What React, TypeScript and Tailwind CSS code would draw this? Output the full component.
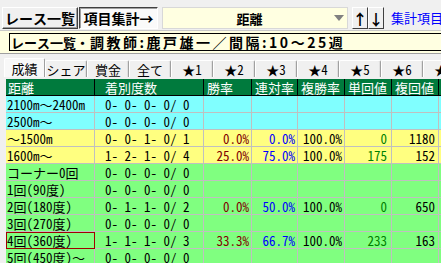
import React from 'react'

const FONT = { fontFamily: '"Noto Sans Mono CJK JP", "Noto Sans CJK JP", "Noto Sans", monospace' }
const PROP = { fontFamily: '"Noto Sans CJK JP", "Noto Sans", sans-serif' }

const TABS = ['成績', 'シェア', '賞金', '全て', '★1', '★2', '★3', '★4', '★5', '★6', '★7']

const HEAD = ['距離', '着別度数', '勝率', '連対率', '複勝率', '単回値', '複回値', '']
const W = ['w-[89px]', 'w-[109px]', 'w-[48px]', 'w-[46px]', 'w-[47px]', 'w-[47px]', 'w-[47px]', 'w-[40px]']

type Row = { name: string; count: string; bg: string; win?: string; ren?: string; fuku?: string; tan?: string; fk?: string; sel?: boolean }

const ROWS: Row[] = [
  { name: '2100m～2400m', count: '0- 0- 0- 0/ 0', bg: 'bg-[#80ffff]' },
  { name: '2500m～', count: '0- 0- 0- 0/ 0', bg: 'bg-[#80ffff]' },
  { name: '～1500m', count: '0- 0- 1- 0/ 1', bg: 'bg-[#ffff80]', win: '0.0%', ren: '0.0%', fuku: '100.0%', tan: '0', fk: '1180' },
  { name: '1600m～', count: '1- 2- 1- 0/ 4', bg: 'bg-[#ffff80]', win: '25.0%', ren: '75.0%', fuku: '100.0%', tan: '175', fk: '152' },
  { name: 'コーナー0回', count: '0- 0- 0- 0/ 0', bg: 'bg-[#80ff80]' },
  { name: '1回(90度)', count: '0- 0- 0- 0/ 0', bg: 'bg-[#80ff80]' },
  { name: '2回(180度)', count: '0- 1- 1- 0/ 2', bg: 'bg-[#80ff80]', win: '0.0%', ren: '50.0%', fuku: '100.0%', tan: '0', fk: '650' },
  { name: '3回(270度)', count: '0- 0- 0- 0/ 0', bg: 'bg-[#80ff80]' },
  { name: '4回(360度)', count: '1- 1- 1- 0/ 3', bg: 'bg-[#80ff80]', win: '33.3%', ren: '66.7%', fuku: '100.0%', tan: '233', fk: '163', sel: true },
  { name: '5回(450度)～', count: '0- 0- 0- 0/ 0', bg: 'bg-[#80ff80]' },
]

function Cell({ w, children, cls = '' }: { w: string; children?: React.ReactNode; cls?: string }) {
  return (
    <div className={`${w} shrink-0 h-full border-r border-b border-[#c0c0c0] flex items-center whitespace-pre overflow-hidden leading-none ${cls}`}>
      {children}
    </div>
  )
}

export default function App() {
  return (
    <div className="w-[441px] h-[263px] overflow-hidden bg-[#f0f0f0] text-black" style={FONT}>
      {/* toolbar */}
      <div className="h-[30px] flex items-start pt-[7px] pl-[2px]">
        <div className="h-[22px] w-[76px] shrink-0 flex items-center justify-center text-[14px] font-bold leading-none border border-t-white border-l-white border-r-[#404040] border-b-[#404040] bg-[#f0f0f0] shadow-[inset_-1px_-1px_0_#a0a0a0]">レース一覧</div>
        <div className="h-[22px] w-[79px] shrink-0 ml-[1px] flex items-center justify-center text-[14px] font-bold leading-none border border-t-[#404040] border-l-[#404040] border-r-white border-b-white bg-[#fafafa] shadow-[inset_1px_1px_0_#a0a0a0]">項目集計→</div>
        <div className="h-[22px] w-[186px] shrink-0 ml-[4px] flex items-center bg-[#ffffe1] border border-[#d8d8d8]">
          <span className="flex-1 text-center text-[13px] font-bold leading-none pl-[2px]">距離</span>
          <svg width="10" height="6" className="mr-[3px] mb-[1px]"><polygon points="0,0 10,0 5,6" fill="#808080" /></svg>
        </div>
        <div className="h-[22px] w-[16px] shrink-0 ml-[4px] flex items-center justify-center text-[15px] font-bold leading-none border border-t-white border-l-white border-r-[#404040] border-b-[#404040]">↑</div>
        <div className="h-[22px] w-[16px] shrink-0 flex items-center justify-center text-[15px] font-bold leading-none border border-t-white border-l-white border-r-[#404040] border-b-[#404040]">↓</div>
        <span className="ml-[7px] mt-[4px] text-[13px] leading-none text-[#0000ff] whitespace-nowrap">集計項目よ</span>
      </div>

      {/* title band */}
      <div className="h-[24px] bg-[#ffffe1] border-t border-[#c8c8c8] border-b border-b-[#a0a0a0] pt-[2px] pl-[9px]">
        <div className="h-[18px] border border-black border-r-0 flex items-center pl-[1px] font-bold whitespace-nowrap leading-none">
          <span className="text-[13px]">レース一覧・</span>
          <span className="text-[14px] tracking-[2.5px] ml-[1px]" style={PROP}>調教師:鹿戸雄一／間隔:10～25週</span>
        </div>
      </div>

      {/* tabs */}
      <div className="h-[25px] flex items-end pl-[4px] pb-[2px] bg-[#f0f0f0]">
        {TABS.map((t, i) => (
          <div
            key={t}
            className={`shrink-0 flex items-center justify-center text-[13px] leading-none border-t border-l border-white border-r border-r-[#a0a0a0] rounded-t-[2px] ${i === 0 ? 'w-[41px] h-[19px] bg-[#f8f8f8]' : 'w-[42px] h-[17px] bg-[#f0f0f0] shadow-[inset_-1px_0_0_#e0e0e0]'}`}
          >
            {t}
          </div>
        ))}
      </div>

      {/* table */}
      <div className="pl-[6px]">
        <div className="h-[17px] flex bg-[#007a3d] text-white text-[13px] leading-none border-b border-black">
          {HEAD.map((h, i) => (
            <div key={i} className={`${W[i]} shrink-0 h-full border-r border-black flex items-center ${i === 0 ? 'pl-[2px]' : i === 1 ? 'pl-[10px]' : 'pl-[3px]'} whitespace-nowrap overflow-hidden`}>{h}</div>
          ))}
        </div>
        {ROWS.map((r, i) => (
          <div key={i} className={`h-[17px] flex text-[13px] ${r.bg}`}>
            <Cell w={W[0]} cls={`pl-[1px] ${r.sel ? 'outline outline-1 -outline-offset-1 outline-[#a00000]' : ''}`}>{r.name}</Cell>
            <Cell w={W[1]} cls="pl-[10px]">{r.count}</Cell>
            <Cell w={W[2]} cls="justify-end pr-[2px] text-[#800000]">{r.win}</Cell>
            <Cell w={W[3]} cls="justify-end pr-[2px] text-[#0000ff]">{r.ren}</Cell>
            <Cell w={W[4]} cls="justify-end pr-[2px]">{r.fuku}</Cell>
            <Cell w={W[5]} cls="justify-end pr-[4px] text-[#008000]">{r.tan}</Cell>
            <Cell w={W[6]} cls="justify-end pr-[3px]">{r.fk}</Cell>
            <Cell w={W[7]} />
          </div>
        ))}
      </div>
    </div>
  )
}
